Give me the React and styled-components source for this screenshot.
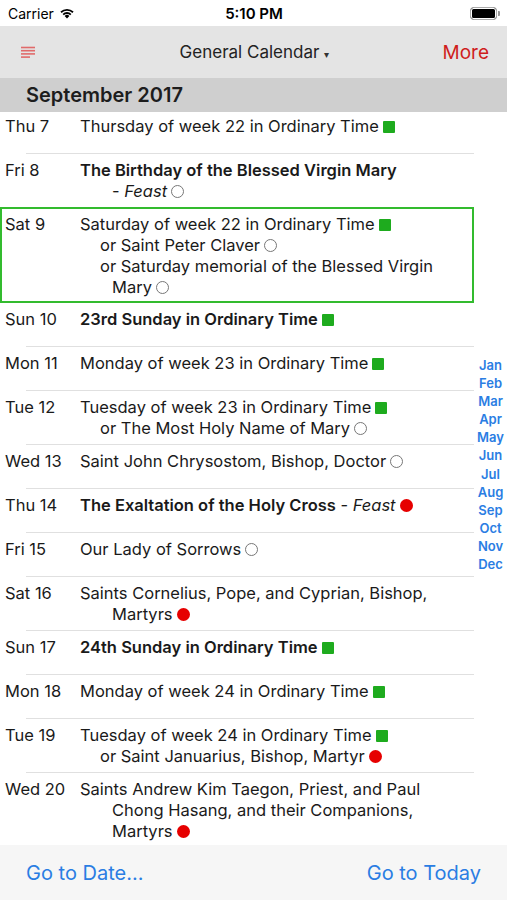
import React from "react";
import styled, { createGlobalStyle } from "styled-components";

const GlobalStyle = createGlobalStyle`
  html, body {
    margin: 0;
    padding: 0;
    background: #fff;
  }
  * {
    box-sizing: border-box;
  }
`;

const months = ["Jan", "Feb", "Mar", "Apr", "May", "Jun", "Jul", "Aug", "Sep", "Oct", "Nov", "Dec"];

const days = [
  { date: "Thu 7", lines: [{ text: "Thursday of week 22 in Ordinary Time", mark: "green" }] },
  { date: "Fri 8", lines: [{ text: "The Birthday of the Blessed Virgin Mary", bold: true, rank: "Feast", mark: "hollow" }] },
  {
    date: "Sat 9",
    selected: true,
    lines: [
      { text: "Saturday of week 22 in Ordinary Time", mark: "green" },
      { text: "or Saint Peter Claver", alt: true, mark: "hollow" },
      { text: "or Saturday memorial of the Blessed Virgin Mary", alt: true, mark: "hollow" },
    ],
  },
  { date: "Sun 10", lines: [{ text: "23rd Sunday in Ordinary Time", bold: true, mark: "green" }] },
  { date: "Mon 11", lines: [{ text: "Monday of week 23 in Ordinary Time", mark: "green" }] },
  {
    date: "Tue 12",
    lines: [
      { text: "Tuesday of week 23 in Ordinary Time", mark: "green" },
      { text: "or The Most Holy Name of Mary", alt: true, mark: "hollow" },
    ],
  },
  { date: "Wed 13", lines: [{ text: "Saint John Chrysostom, Bishop, Doctor", mark: "hollow" }] },
  { date: "Thu 14", lines: [{ text: "The Exaltation of the Holy Cross", bold: true, rank: "Feast", mark: "red" }] },
  { date: "Fri 15", lines: [{ text: "Our Lady of Sorrows", mark: "hollow" }] },
  { date: "Sat 16", lines: [{ text: "Saints Cornelius, Pope, and Cyprian, Bishop, Martyrs", mark: "red" }] },
  { date: "Sun 17", lines: [{ text: "24th Sunday in Ordinary Time", bold: true, mark: "green" }] },
  { date: "Mon 18", lines: [{ text: "Monday of week 24 in Ordinary Time", mark: "green" }] },
  {
    date: "Tue 19",
    lines: [
      { text: "Tuesday of week 24 in Ordinary Time", mark: "green" },
      { text: "or Saint Januarius, Bishop, Martyr", alt: true, mark: "red" },
    ],
  },
  {
    date: "Wed 20",
    lines: [{ text: "Saints Andrew Kim Taegon, Priest, and Paul Chong Hasang, and their Companions, Martyrs", mark: "red" }],
  },
];

function Celebration({ line }) {
  const words = line.text.split(" ");
  const last = words.pop();
  const head = words.join(" ");
  return (
    <Entry alt={line.alt}>
      <Title bold={line.bold ? 1 : 0}>
        {head}{" "}
        {line.rank ? last : null}
      </Title>
      {line.rank ? " " : null}
      <Keep>
        {line.rank ? (
          <Rank>-{"\u00a0"}<i>{line.rank}</i></Rank>
        ) : (
          <Title bold={line.bold ? 1 : 0}>{last}</Title>
        )}
        <Mark kind={line.mark} />
      </Keep>
    </Entry>
  );
}

function App() {
  return (
    <>
      <GlobalStyle />
      <Screen>
        <StatusBar>
          <Carrier>
            Carrier
            <svg width="16" height="12" viewBox="0 0 16 12">
              <path d="M8 11.5 L5.6 8.9 A3.4 3.4 0 0 1 10.4 8.9 Z" fill="#000" />
              <path d="M3.6 6.9 A6.3 6.3 0 0 1 12.4 6.9 L11.2 8.2 A4.6 4.6 0 0 0 4.8 8.2 Z" fill="#000" />
              <path d="M1.4 4.6 A9.4 9.4 0 0 1 14.6 4.6 L13.4 5.9 A7.7 7.7 0 0 0 2.6 5.9 Z" fill="#000" />
            </svg>
          </Carrier>
          <Clock>5:10 PM</Clock>
          <Battery>
            <BatteryBody />
            <BatteryNub />
          </Battery>
        </StatusBar>

        <NavBar>
          <MenuButton>
            <svg width="16" height="13" viewBox="0 0 16 13">
              <g stroke="#e06a6a" strokeWidth="1.6">
                <line x1="1" y1="1.5" x2="15" y2="1.5" />
                <line x1="1" y1="4.7" x2="15" y2="4.7" />
                <line x1="1" y1="7.9" x2="15" y2="7.9" />
                <line x1="1" y1="11.1" x2="10" y2="11.1" />
              </g>
            </svg>
          </MenuButton>
          <NavTitle>
            General Calendar <Caret>▾</Caret>
          </NavTitle>
          <MoreButton>More</MoreButton>
        </NavBar>

        <Body>
          <SectionHeader>September 2017</SectionHeader>
          <List>
            {days.map((day, i) => {
              const next = days[i + 1];
              const hideSep = day.selected || (next && next.selected);
              return (
                <React.Fragment key={day.date}>
                  <Row selected={day.selected}>
                    <DateCell>{day.date}</DateCell>
                    <Entries>
                      {day.lines.map((line, j) => (
                        <Celebration key={j} line={line} />
                      ))}
                    </Entries>
                  </Row>
                  {!hideSep && <Separator />}
                </React.Fragment>
              );
            })}
          </List>
          <MonthIndex>
            {months.map((m) => (
              <MonthLink key={m}>{m}</MonthLink>
            ))}
          </MonthIndex>
        </Body>

        <Footer>
          <FooterLink>Go to Date...</FooterLink>
          <FooterLink>Go to Today</FooterLink>
        </Footer>
      </Screen>
    </>
  );
}

const Screen = styled.div`
  width: 507px;
  height: 900px;
  display: flex;
  flex-direction: column;
  overflow: hidden;
  font-family: Inter, "Liberation Sans", sans-serif;
  color: #111;
  background: #fff;
`;

const StatusBar = styled.div`
  height: 26px;
  flex: none;
  display: grid;
  grid-template-columns: 1fr auto 1fr;
  align-items: center;
  padding: 0 7px 0 8px;
  background: #fff;
`;

const Carrier = styled.div`
  display: flex;
  align-items: center;
  gap: 5px;
  font-size: 14px;
  color: #000;
`;

const Clock = styled.div`
  font-size: 15px;
  font-weight: 600;
  color: #000;
`;

const Battery = styled.div`
  justify-self: end;
  display: flex;
  align-items: center;
  gap: 1px;
`;

const BatteryBody = styled.div`
  width: 27px;
  height: 13px;
  border-radius: 3.5px;
  border: 1.5px solid #aaa;
  background: #000;
  box-shadow: inset 0 0 0 1px #fff;
`;

const BatteryNub = styled.div`
  width: 2px;
  height: 5px;
  border-radius: 0 1px 1px 0;
  background: #999;
`;

const NavBar = styled.div`
  height: 52px;
  flex: none;
  display: grid;
  grid-template-columns: 1fr auto 1fr;
  align-items: center;
  padding: 0 18px 0 20px;
  background: #e4e4e4;
`;

const MenuButton = styled.div`
  display: flex;
  align-items: center;
`;

const NavTitle = styled.div`
  font-size: 17px;
  color: #222;
  display: flex;
  align-items: center;
  gap: 5px;
`;

const Caret = styled.span`
  font-size: 10px;
  color: #333;
  margin-top: 3px;
`;

const MoreButton = styled.div`
  justify-self: end;
  font-size: 19px;
  color: #cf1d1d;
`;

const Body = styled.div`
  flex: 1;
  position: relative;
  display: flex;
  flex-direction: column;
  min-height: 0;
`;

const SectionHeader = styled.div`
  height: 34px;
  flex: none;
  display: flex;
  align-items: center;
  padding-left: 26px;
  background: #cfcfcf;
  font-size: 20px;
  font-weight: 600;
  color: #1d1d1d;
  position: relative;
  z-index: 1;
`;

const List = styled.div`
  flex: 1;
  overflow: hidden;
  margin-top: -2px;
`;

const Row = styled.div`
  display: flex;
  align-items: flex-start;
  min-height: 43px;
  margin-right: 33px;
  padding: ${(p) => (p.selected ? "5px 10px 3px 3px" : "6px 12px 5px 5px")};
  border: ${(p) => (p.selected ? "2px solid #33bb2e" : "none")};
  font-size: 16.5px;
  line-height: 21px;
`;

const DateCell = styled.div`
  width: 75px;
  flex: none;
  color: #1a1a1a;
`;

const Entries = styled.div`
  flex: 1;
  min-width: 0;
`;

const Entry = styled.div`
  padding-left: 32px;
  text-indent: ${(p) => (p.alt ? "-12px" : "-32px")};
  color: #1a1a1a;
`;

const Title = styled.span`
  font-weight: ${(p) => (p.bold ? 600 : 400)};
`;

const Keep = styled.span`
  white-space: nowrap;
`;

const Rank = styled.span`
  font-weight: 400;
`;

const Mark = styled.span`
  display: inline-block;
  vertical-align: -1px;
  margin-left: 4px;
  width: ${(p) => (p.kind === "green" ? "12px" : "13px")};
  height: ${(p) => (p.kind === "green" ? "12px" : "13px")};
  border-radius: ${(p) => (p.kind === "green" ? "1px" : "50%")};
  background: ${(p) => (p.kind === "green" ? "#1eab1e" : p.kind === "red" ? "#e60000" : "#fff")};
  border: ${(p) => (p.kind === "hollow" ? "1.3px solid #777" : "none")};
`;

const Separator = styled.div`
  height: 1px;
  margin-left: 26px;
  margin-right: 33px;
  background: #e0e0e0;
`;

const MonthIndex = styled.div`
  position: absolute;
  top: 0;
  bottom: 0;
  right: 0;
  width: 33px;
  display: flex;
  flex-direction: column;
  justify-content: center;
  align-items: center;
  padding-top: 6px;
`;

const MonthLink = styled.div`
  font-size: 13px;
  font-weight: 600;
  line-height: 18.1px;
  color: #2a7de3;
`;

const Footer = styled.div`
  height: 55px;
  flex: none;
  display: flex;
  align-items: center;
  justify-content: space-between;
  padding: 0 26px;
  background: #f6f6f6;
`;

const FooterLink = styled.div`
  font-size: 20px;
  color: #2a7de3;
`;

export default App;
